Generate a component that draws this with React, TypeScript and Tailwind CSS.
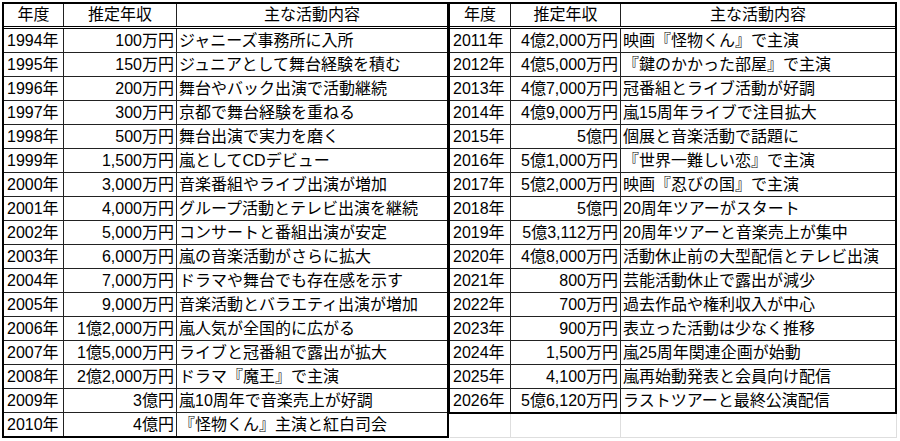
import React from "react";

type Row = [string, string, string];

const left: Row[] = [
  ["1994年", "100万円", "ジャニーズ事務所に入所"],
  ["1995年", "150万円", "ジュニアとして舞台経験を積む"],
  ["1996年", "200万円", "舞台やバック出演で活動継続"],
  ["1997年", "300万円", "京都で舞台経験を重ねる"],
  ["1998年", "500万円", "舞台出演で実力を磨く"],
  ["1999年", "1,500万円", "嵐としてCDデビュー"],
  ["2000年", "3,000万円", "音楽番組やライブ出演が増加"],
  ["2001年", "4,000万円", "グループ活動とテレビ出演を継続"],
  ["2002年", "5,000万円", "コンサートと番組出演が安定"],
  ["2003年", "6,000万円", "嵐の音楽活動がさらに拡大"],
  ["2004年", "7,000万円", "ドラマや舞台でも存在感を示す"],
  ["2005年", "9,000万円", "音楽活動とバラエティ出演が増加"],
  ["2006年", "1億2,000万円", "嵐人気が全国的に広がる"],
  ["2007年", "1億5,000万円", "ライブと冠番組で露出が拡大"],
  ["2008年", "2億2,000万円", "ドラマ『魔王』で主演"],
  ["2009年", "3億円", "嵐10周年で音楽売上が好調"],
  ["2010年", "4億円", "『怪物くん』主演と紅白司会"],
];

const right: Row[] = [
  ["2011年", "4億2,000万円", "映画『怪物くん』で主演"],
  ["2012年", "4億5,000万円", "『鍵のかかった部屋』で主演"],
  ["2013年", "4億7,000万円", "冠番組とライブ活動が好調"],
  ["2014年", "4億9,000万円", "嵐15周年ライブで注目拡大"],
  ["2015年", "5億円", "個展と音楽活動で話題に"],
  ["2016年", "5億1,000万円", "『世界一難しい恋』で主演"],
  ["2017年", "5億2,000万円", "映画『忍びの国』で主演"],
  ["2018年", "5億円", "20周年ツアーがスタート"],
  ["2019年", "5億3,112万円", "20周年ツアーと音楽売上が集中"],
  ["2020年", "4億8,000万円", "活動休止前の大型配信とテレビ出演"],
  ["2021年", "800万円", "芸能活動休止で露出が減少"],
  ["2022年", "700万円", "過去作品や権利収入が中心"],
  ["2023年", "900万円", "表立った活動は少なく推移"],
  ["2024年", "1,500万円", "嵐25周年関連企画が始動"],
  ["2025年", "4,100万円", "嵐再始動発表と会員向け配信"],
  ["2026年", "5億6,120万円", "ラストツアーと最終公演配信"],
];

function Header({ cols }: { cols: string }) {
  return (
    <div className={cols}>
      <div className="border-r border-[#222] flex items-center justify-center">年度</div>
      <div className="border-r border-[#222] flex items-center justify-center">推定年収</div>
      <div className="flex items-center justify-center">主な活動内容</div>
    </div>
  );
}

function Body({ rows, cols }: { rows: Row[]; cols: string }) {
  return (
    <>
      {rows.map((r, i) => (
        <div key={i} className={cols}>
          <div className="border-r border-[#222] flex items-center pl-[3px] whitespace-nowrap">{r[0]}</div>
          <div className="border-r border-[#222] flex items-center justify-end pr-[2px] whitespace-nowrap">{r[1]}</div>
          <div className="flex items-center pl-[2px] whitespace-nowrap overflow-hidden">{r[2]}</div>
        </div>
      ))}
    </>
  );
}

export default function App() {
  return (
    <div className="w-[900px] h-[441px] bg-white overflow-hidden text-black text-[16px] leading-none font-['Liberation_Sans','Noto_Sans_CJK_JP',sans-serif]">
      <div className="flex pt-[2px] pl-[2px]">
        <div className="w-[447px] border-2 border-black">
          <Header cols="grid grid-cols-[60px_113px_1fr] h-[25px] border-b-[3px] border-double border-black" />
          <div className="[&>div:last-child]:border-b-0 [&>div:last-child]:h-[23px]">
            <Body rows={left} cols="grid grid-cols-[60px_113px_1fr] h-[24px] border-b border-[#222]" />
          </div>
        </div>
        <div className="w-[448px] flex flex-col">
          <div className="border-y-2 border-r-2 border-l border-black">
            <Header cols="grid grid-cols-[61px_110px_1fr] h-[25px] border-b-[3px] border-double border-black" />
            <div className="[&>div:last-child]:border-b-0 [&>div:last-child]:h-[23px]">
              <Body rows={right} cols="grid grid-cols-[61px_110px_1fr] h-[24px] border-b border-[#222]" />
            </div>
          </div>
          <div className="ml-[1px] grid grid-cols-[61px_110px_1fr] h-[24px] border-b border-[#dedede]">
            <div className="border-r border-[#dedede]" />
            <div className="border-r border-[#dedede]" />
            <div className="border-r border-[#dedede]" />
          </div>
        </div>
      </div>
    </div>
  );
}
